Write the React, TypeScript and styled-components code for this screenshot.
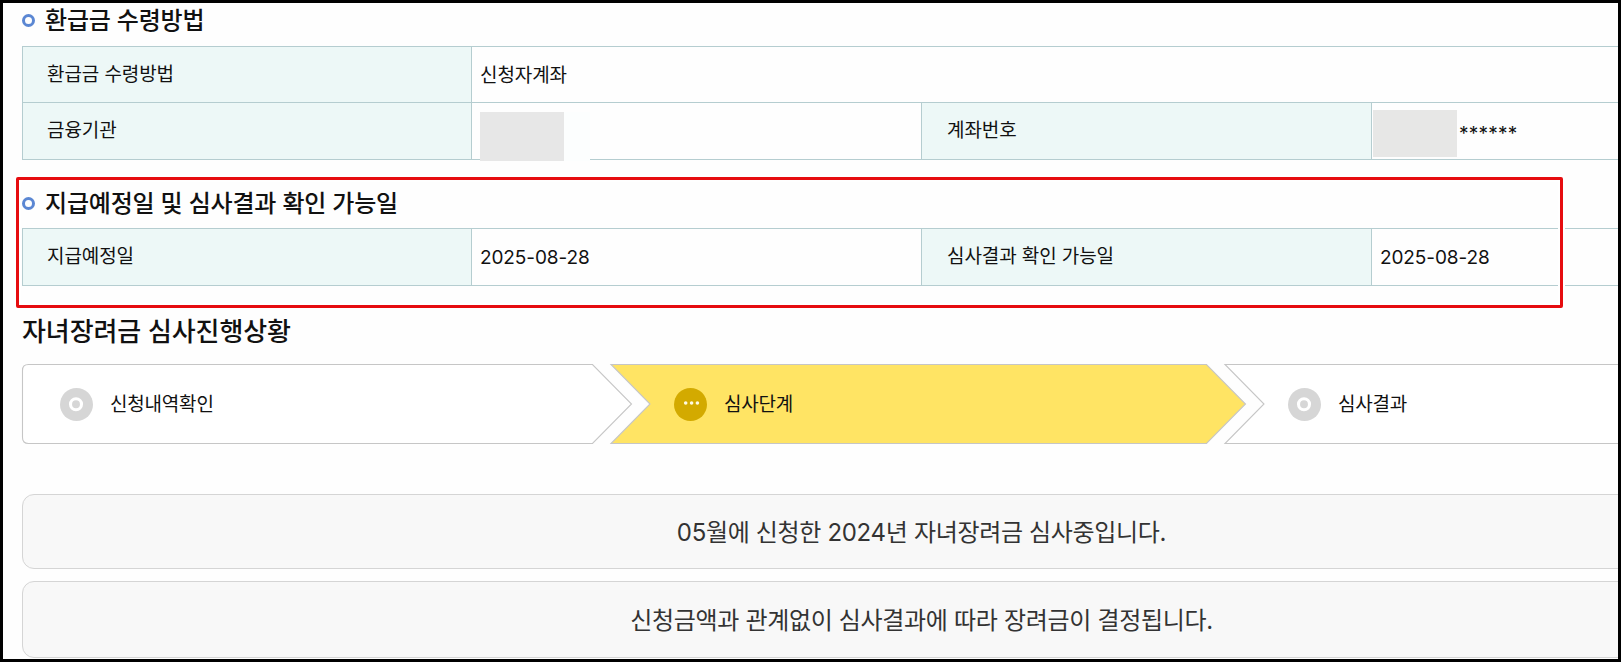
import styled, { createGlobalStyle, css } from "styled-components";

const steps = [
  { label: "신청내역확인", status: "done" },
  { label: "심사단계", status: "active" },
  { label: "심사결과", status: "wait" },
];

function StepShape({ first, active }: { first: boolean; active: boolean }) {
  const shape = first
    ? "M6.5 .5H570.5L609.5 40L570.5 79.5H6.5Q.5 79.5 .5 73.5V6.5Q.5 .5 6.5 .5Z"
    : "M-25 .5H570.5L609.5 40L570.5 79.5H-25L14 40Z";

  return (
    <ShapeSvg width="614" height="80" viewBox="0 0 614 80">
      <path d={shape} fill={active ? "#ffe464" : "#fff"} stroke="#c6c6c6" strokeWidth="1.1" />
    </ShapeSvg>
  );
}

function StepIcon({ active }: { active: boolean }) {
  return (
    <svg width="33" height="33" viewBox="0 0 33 33">
      <circle cx="16.5" cy="16.5" r="16.5" fill={active ? "#d3aa00" : "#d6d6d6"} />
      {active ? (
        <g fill="#fffbe4">
          <circle cx="11.7" cy="15" r="1.8" />
          <circle cx="17.6" cy="15" r="1.8" />
          <circle cx="23.4" cy="15" r="1.8" />
        </g>
      ) : (
        <circle cx="16" cy="16.3" r="5.5" fill="none" stroke="#fff" strokeWidth="3.1" />
      )}
    </svg>
  );
}

function App() {
  return (
    <>
      <GlobalStyle />
      <Screen>
        <Content>
          <SectionTitle>
            <Bullet />
            환급금 수령방법
          </SectionTitle>
          <InfoTable>
            <Row $height={56}>
              <HeadCell>환급금 수령방법</HeadCell>
              <DataCell $wide>신청자계좌</DataCell>
            </Row>
            <Row $height={57}>
              <HeadCell>금융기관</HeadCell>
              <DataCell>
                <BankMask />
              </DataCell>
              <HeadCell>계좌번호</HeadCell>
              <DataCell>
                <AccountMask />
                <Stars>******</Stars>
              </DataCell>
            </Row>
          </InfoTable>

          <SectionTitle $second>
            <Bullet />
            지급예정일 및 심사결과 확인 가능일
          </SectionTitle>
          <InfoTable $tight>
            <Row $height={57}>
              <HeadCell>지급예정일</HeadCell>
              <DataCell>2025-08-28</DataCell>
              <HeadCell>심사결과 확인 가능일</HeadCell>
              <DataCell>2025-08-28</DataCell>
            </Row>
          </InfoTable>

          <ProgressTitle>자녀장려금 심사진행상황</ProgressTitle>
          <StepList>
            {steps.map((step, index) => (
              <Step key={step.label}>
                <StepShape first={index === 0} active={step.status === "active"} />
                <StepBody>
                  <StepIcon active={step.status === "active"} />
                  <StepLabel>{step.label}</StepLabel>
                </StepBody>
              </Step>
            ))}
          </StepList>

          <NoticeList>
            <Notice $height={75}>05월에 신청한 2024년 자녀장려금 심사중입니다.</Notice>
            <Notice $height={77}>신청금액과 관계없이 심사결과에 따라 장려금이 결정됩니다.</Notice>
          </NoticeList>
        </Content>
        <Highlight />
      </Screen>
    </>
  );
}

export default App;

const GlobalStyle = createGlobalStyle`
  * {
    box-sizing: border-box;
  }

  body {
    margin: 0;
    overflow: hidden;
    background: #fff;
    font-family: Inter, "Noto Sans CJK KR", sans-serif;
    color: #111;
  }
`;

const Screen = styled.div`
  position: relative;
  width: 1621px;
  height: 662px;
  overflow: hidden;
  border: 3px solid #000;
  background: #fefefe;
`;

const Content = styled.div`
  width: 1819px;
  padding-left: 19px;
`;

const SectionTitle = styled.h3<{ $second?: boolean }>`
  display: flex;
  align-items: center;
  height: ${props => props.$second ? "42px" : "36px"};
  margin: ${props => props.$second ? "23px 0 0" : "0"};
  font-size: 24px;
  font-weight: 500;
  line-height: 36px;
  letter-spacing: -0.2px;
  white-space: nowrap;
`;

const Bullet = styled.span`
  flex: none;
  width: 13px;
  height: 13px;
  margin: 0 10px 2px 0;
  border: 3px solid #5b87d3;
  border-radius: 50%;
`;

const InfoTable = styled.div<{ $tight?: boolean }>`
  width: 1800px;
  margin-top: ${props => props.$tight ? "3px" : "7px"};
  border: 1px solid #b5cdd0;
  border-bottom: 0;
`;

const Row = styled.div<{ $height: number }>`
  display: flex;
  height: ${props => props.$height}px;
  border-bottom: 1px solid #b5cdd0;
`;

const cell = css`
  display: flex;
  align-items: center;
  flex: none;
  font-size: 19px;
  line-height: 28px;
  letter-spacing: -0.1px;
  white-space: nowrap;
`;

const HeadCell = styled.div`
  ${cell}
  width: 450px;
  padding-left: 25px;
  border-right: 1px solid #b5cdd0;
  background: #edf8f7;

  &:first-child {
    width: 449px;
    padding-left: 24px;
  }
`;

const DataCell = styled.div<{ $wide?: boolean }>`
  ${cell}
  width: ${props => props.$wide ? "1350px" : "450px"};
  padding: 2px 0 0 8px;

  &:not(:last-child) {
    border-right: 1px solid #b5cdd0;
  }
`;

const BankMask = styled.div`
  width: 110px;
  height: 49px;
  margin-bottom: -8px;
  border-right: 26px solid #fcfefe;
  background: #e7e7e7;
`;

const AccountMask = styled.div`
  width: 84px;
  height: 47px;
  margin: 3px 2px 0 -7px;
  background: #e7e7e6;
`;

const Stars = styled.span`
  padding-top: 4px;
  letter-spacing: 0.25px;
`;

const ProgressTitle = styled.h2`
  height: 36px;
  margin: 28px 0 14px;
  font-size: 26px;
  font-weight: 500;
  line-height: 36px;
  letter-spacing: -0.1px;
`;

const StepList = styled.div`
  display: flex;
  height: 80px;
`;

const Step = styled.div`
  display: grid;
  flex: none;
  width: 614px;
  height: 80px;

  > * {
    grid-area: 1 / 1;
  }
`;

const ShapeSvg = styled.svg`
  overflow: visible;
`;

const StepBody = styled.div`
  display: flex;
  align-items: center;
  gap: 17px;
  padding-left: 38px;
`;

const StepLabel = styled.span`
  padding-top: 2px;
  font-size: 19px;
  line-height: 28px;
  letter-spacing: -0.2px;
`;

const NoticeList = styled.div`
  display: flex;
  flex-direction: column;
  gap: 12px;
  margin-top: 50px;
`;

const Notice = styled.p<{ $height: number }>`
  display: flex;
  align-items: center;
  justify-content: center;
  width: 1800px;
  height: ${props => props.$height}px;
  margin: 0;
  padding: 2px 1px 0 0;
  border: 1px solid #d5d5d5;
  border-radius: 12px;
  background: #f8f8f8;
  color: #333;
  font-size: 24px;
  line-height: 36px;
  letter-spacing: -0.33px;
`;

/* red marker drawn over the payment date section */
const Highlight = styled.div`
  position: absolute;
  top: 174px;
  left: 13px;
  width: 1547px;
  height: 131px;
  border: 3px solid #e60c0f;
  border-radius: 2px;
  box-shadow: 0 0 0 2px #fff, inset 0 0 0 2px #fff;
`;
